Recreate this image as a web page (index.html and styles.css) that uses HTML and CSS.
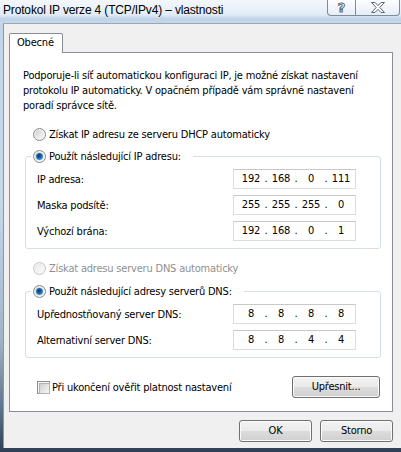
FILE: index.html
```html
<!DOCTYPE html>
<html lang="cs">
<head>
<meta charset="utf-8">
<title>Protokol IP verze 4 (TCP/IPv4) – vlastnosti</title>
<link rel="stylesheet" href="styles.css">
</head>
<body>
<div class="window">
  <div class="titlebar">
    <div class="title">Protokol IP verze 4 (TCP/IPv4) – vlastnosti</div>
    <div class="caption-buttons">
      <div class="cap-btn help"><span class="help-glyph">?</span></div>
      <div class="cap-btn close">
        <svg width="16" height="11" viewBox="0 0 16 11"><path d="M1.5 0.5 H5 L8 3.6 L11 0.5 H14.5 L9.8 5.5 L14.5 10.5 H11 L8 7.4 L5 10.5 H1.5 L6.2 5.5 Z" fill="#ffffff" stroke="#5c6570" stroke-width="1" stroke-linejoin="round"/></svg>
      </div>
    </div>
  </div>
  <div class="client">
    <div class="tabs"><div class="tab">Obecné</div></div>
    <div class="panel">
      <p class="intro">Podporuje-li síť automatickou konfiguraci IP, je možné získat nastavení<br>protokolu IP automaticky. V opačném případě vám správné nastavení<br>poradí správce sítě.</p>

      <div class="radio-row first"><span class="radio"></span><span>Získat IP adresu ze serveru DHCP automaticky</span></div>
      <fieldset class="group">
        <legend><span class="radio checked"></span><span>Použít následující IP adresu:</span></legend>
        <div class="rows">
          <div class="field-row"><span class="label">IP adresa:</span>
            <div class="ipbox"><span>192</span><i>.</i><span>168</span><i>.</i><span>0</span><i>.</i><span>111</span></div></div>
          <div class="field-row"><span class="label">Maska podsítě:</span>
            <div class="ipbox"><span>255</span><i>.</i><span>255</span><i>.</i><span>255</span><i>.</i><span>0</span></div></div>
          <div class="field-row"><span class="label">Výchozí brána:</span>
            <div class="ipbox"><span>192</span><i>.</i><span>168</span><i>.</i><span>0</span><i>.</i><span>1</span></div></div>
        </div>
      </fieldset>

      <div class="radio-row second disabled"><span class="radio"></span><span>Získat adresu serveru DNS automaticky</span></div>
      <fieldset class="group dns">
        <legend><span class="radio checked"></span><span>Použít následující adresy serverů DNS:</span></legend>
        <div class="rows">
          <div class="field-row"><span class="label">Upřednostňovaný server DNS:</span>
            <div class="ipbox"><span>8</span><i>.</i><span>8</span><i>.</i><span>8</span><i>.</i><span>8</span></div></div>
          <div class="field-row"><span class="label">Alternativní server DNS:</span>
            <div class="ipbox"><span>8</span><i>.</i><span>8</span><i>.</i><span>4</span><i>.</i><span>4</span></div></div>
        </div>
      </fieldset>

      <div class="check-row">
        <div class="check-label"><span class="checkbox"></span><span>Při ukončení ověřit platnost nastavení</span></div>
        <button class="btn advanced">Upřesnit...</button>
      </div>
    </div>
    <div class="dialog-buttons">
      <button class="btn">OK</button>
      <button class="btn">Storno</button>
    </div>
  </div>
</div>
</body>
</html>
```

FILE: styles.css
```css
* { box-sizing: border-box; }
html, body { margin: 0; padding: 0; }
body {
  width: 401px;
  height: 452px;
  overflow: hidden;
  background: #3b4d62;
  font-family: "DejaVu Sans Condensed", "DejaVu Sans", "Liberation Sans", sans-serif;
  font-stretch: condensed;
  font-size: 11px;
  letter-spacing: -0.2px;
  color: #000;
}
.window {
  width: 401px;
  height: 452px;
  display: flex;
  flex-direction: column;
  background: linear-gradient(to bottom, #e4edf7 0, #d6e4f3 16px, #c3d5ea 24px, #c7d8ea 200px, #9fb3c9 340px, #5d728b 410px, #2f4055 452px);
}
.titlebar {
  height: 23px;
  flex: none;
  display: flex;
  align-items: flex-start;
  background: linear-gradient(to bottom, rgba(255,255,255,0.55) 0, rgba(255,255,255,0.25) 15px, rgba(160,185,215,0.35) 19px, rgba(200,218,238,0.3) 23px);
}
.title {
  padding: 3px 0 0 3px;
  font-family: "Liberation Sans", Arial, sans-serif;
  font-stretch: normal;
  font-size: 12px;
  letter-spacing: -0.16px;
  line-height: 15px;
  color: #000;
  white-space: nowrap;
}
.caption-buttons {
  margin-left: auto;
  margin-right: 1px;
  display: flex;
}
.cap-btn {
  height: 16px;
  border: 1px solid #7f8b99;
  border-top: none;
  background: linear-gradient(to bottom, rgba(255,255,255,0.8), rgba(230,238,247,0.65));
  display: flex;
  align-items: center;
  justify-content: center;
}
.help {
  width: 28px;
  border-right: none;
  border-radius: 0 0 0 4px;
}
.close {
  width: 45px;
  border-radius: 0 0 4px 0;
}
.help-glyph {
  font-family: "DejaVu Sans", sans-serif;
  font-stretch: normal;
  font-weight: bold;
  font-size: 13px;
  line-height: 14px;
  color: #fff;
  -webkit-text-stroke: 1px #5c6570;
  letter-spacing: 0;
}
.client {
  flex: 1;
  margin-left: 3px;
  margin-bottom: 4px;
  border-left: 1px solid #8b97a6;
  border-top: 1px solid #9aa7b6;
  background: #f0f0f0;
  padding: 9px 0 0 5px;
}
.tabs {
  display: flex;
}
.tab {
  width: 54px;
  height: 20px;
  margin-bottom: -1px;
  position: relative;
  z-index: 1;
  border: 1px solid #898c95;
  border-bottom: none;
  border-radius: 2px 2px 0 0;
  background: #fff;
  padding-left: 7px;
  line-height: 18px;
}
.panel {
  width: 384px;
  height: 360px;
  border: 1px solid #898c95;
  background: #fff;
  padding: 15px 0 0 13px;
}
.intro {
  margin: 0;
  line-height: 15px;
  white-space: nowrap;
}
.radio-row {
  display: flex;
  align-items: center;
  height: 16px;
  margin-left: 10px;
  white-space: nowrap;
}
.radio-row.first { margin-top: 13px; }
.radio-row.second { margin-top: 11px; }
.radio-row.disabled { color: #8f8f8f; }
.radio {
  flex: none;
  width: 13px;
  height: 13px;
  margin-right: 3px;
  border-radius: 50%;
  border: 1px solid #8a8c8e;
  background: linear-gradient(135deg, #c9c9c9 0%, #e6e6e6 50%, #fbfbfb 100%);
  box-shadow: inset 0 0 0 1px #f4f4f4;
  position: relative;
}
.disabled .radio {
  border-color: #c5c7c9;
  background: linear-gradient(135deg, #e6e6e6 0%, #f2f2f2 50%, #fcfcfc 100%);
}
.radio.checked::after {
  content: "";
  position: absolute;
  left: 2px;
  top: 2px;
  width: 7px;
  height: 7px;
  border-radius: 50%;
  background: radial-gradient(circle at 45% 40%, #0d3a6b 0, #1a5da0 35%, #3c9ad8 70%, #8fd3f7 100%);
}
.group {
  margin: 6px 0 0 2px;
  width: 356px;
  border: 1px solid #d5dfe5;
  border-radius: 3px;
  padding: 0 0 7px 0;
  min-width: 0;
}
.group.dns { margin-top: 7px; }
.group legend {
  display: flex;
  align-items: center;
  height: 16px;
  margin-left: 5px;
  padding: 0 12px 0 2px;
  white-space: nowrap;
}
.rows {
  display: flex;
  flex-direction: column;
  gap: 6px;
  padding: 5px 24px 0 11px;
}
.field-row {
  display: flex;
  align-items: center;
  justify-content: space-between;
  height: 20px;
}
.label { white-space: nowrap; }
.ipbox {
  width: 123px;
  height: 20px;
  border: 1px solid #dcdcdc;
  border-top-color: #c8c8c8;
  background: #fff;
  display: grid;
  grid-template-columns: 26px 4px 26px 4px 26px 4px 26px;
  align-items: center;
  padding-left: 4px;
  line-height: 18px;
}
.ipbox span { text-align: center; }
.ipbox i { font-style: normal; text-align: center; }
.check-row {
  margin: 18px 12px 0 14px;
  height: 22px;
  display: flex;
  align-items: center;
  justify-content: space-between;
}
.check-label {
  display: flex;
  align-items: center;
  white-space: nowrap;
}
.checkbox {
  flex: none;
  width: 13px;
  height: 13px;
  margin-right: 2px;
  border: 1px solid #8e8f8f;
  background: #f4f4f4;
  position: relative;
}
.checkbox::after {
  content: "";
  position: absolute;
  left: 1px;
  top: 1px;
  width: 9px;
  height: 9px;
  border: 1px solid #b0b4b8;
  background: linear-gradient(135deg, #cfcfcf 0%, #e4e4e4 50%, #f6f6f6 100%);
}
.btn {
  font: inherit;
  letter-spacing: inherit;
  color: #000;
  height: 22px;
  padding: 0;
  border: 1px solid #707070;
  border-radius: 3px;
  background: linear-gradient(to bottom, #f2f2f2 0%, #ebebeb 50%, #dddddd 50%, #cfcfcf 100%);
  box-shadow: inset 0 0 0 1px #fbfbfb;
  line-height: 18px;
}
.btn.advanced { width: 88px; }
.dialog-buttons {
  width: 384px;
  margin-top: 8px;
  display: flex;
  justify-content: flex-end;
  gap: 8px;
}
.dialog-buttons .btn { width: 73px; }
```
